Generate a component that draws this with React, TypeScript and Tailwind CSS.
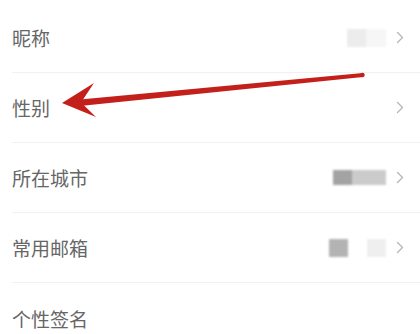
import React from 'react'

type Row = { label: string; value?: React.ReactNode; chevron: boolean }

function Chevron() {
  return (
    <svg width="8" height="13" viewBox="0 0 8 13" className="shrink-0">
      <path d="M1.5 1.5 L6.5 6.5 L1.5 11.5" fill="none" stroke="#b5b5b5" strokeWidth="1.3" strokeLinecap="round" strokeLinejoin="round" />
    </svg>
  )
}

const rows: Row[] = [
  {
    label: '昵称',
    chevron: true,
    value: (
      <div className="flex items-center blur-[1px]">
        <div className="w-[19px] h-[18px] bg-[#ececec]" />
        <div className="w-[20px] h-[18px] bg-[#f6f6f6]" />
      </div>
    ),
  },
  { label: '性别', chevron: true },
  {
    label: '所在城市',
    chevron: true,
    value: (
      <div className="flex items-center blur-[1px]">
        <div className="w-[19px] h-[15px] bg-[#a3a3a3]" />
        <div className="w-[34px] h-[15px] bg-[#cbcbcb]" />
      </div>
    ),
  },
  {
    label: '常用邮箱',
    chevron: true,
    value: (
      <div className="flex items-center blur-[1px]">
        <div className="w-[19px] h-[18px] bg-[#b3b3b3]" />
        <div className="w-[19px] h-[18px]" />
        <div className="w-[19px] h-[18px] bg-[#efefef]" />
      </div>
    ),
  },
  { label: '个性签名', chevron: false },
]

export default function App() {
  return (
    <div className="relative w-[420px] h-[334px] overflow-hidden bg-white" style={{ fontFamily: '"Noto Sans CJK SC", "Noto Sans", sans-serif' }}>
      <div className="flex flex-col pt-[3px]">
        {rows.map((r) => (
          <div key={r.label} className="ml-[12px] flex items-center h-[70px] border-b border-[#f1f1f1] last:border-b-0 pr-[16px]">
            <span className="text-[19px] text-[#666666] leading-none">{r.label}</span>
            <div className="flex-1" />
            {r.value && <div className="mr-[10px]">{r.value}</div>}
            {r.chevron && <Chevron />}
          </div>
        ))}
      </div>
      <svg className="absolute left-0 top-0 pointer-events-none" width="420" height="334" viewBox="0 0 420 334">
        <path d="M363 73 L80 99.5 L80 106 L363 77 Z" fill="#c4201b" />
        <circle cx="362.5" cy="75" r="2.2" fill="#c4201b" />
        <path d="M62 103 L94 83 L81 102.5 L96 117 Z" fill="#c4201b" />
      </svg>
    </div>
  )
}
